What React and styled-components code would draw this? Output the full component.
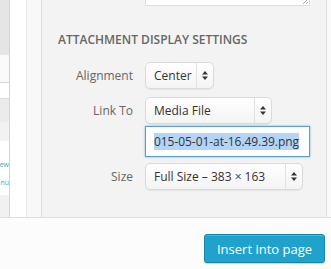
import styled, { createGlobalStyle } from 'styled-components';

const GlobalStyle = createGlobalStyle`
    html, body {
        margin: 0;
        padding: 0;
        background: #fcfcfc;
        font-family: "Open Sans", "Liberation Sans", sans-serif;
    }
`

const Frame = styled.div`
    width: 331px;
    height: 269px;
    display: flex;
    flex-direction: column;
    overflow: hidden;
`

const Main = styled.div`
    height: 217px;
    display: flex;
`

const GridStrip = styled.div`
    width: 9px;
    border-right: 1px solid #d4d4d4;
    display: flex;
    flex-direction: column;
    background: #fff;
`

const StripBlock = styled.div`
    height: ${p => p.$h}px;
    box-sizing: border-box;
    background: ${p => p.$bg};
    border-top: ${p => p.$top ? '1px solid #dcdcdc' : 'none'};
    border-bottom: ${p => p.$bottom ? '1px solid #d4d4d4' : 'none'};
    display: flex;
    flex-direction: column;
    padding-top: ${p => p.$pt || 0}px;
    gap: 9px;
    flex: ${p => p.$grow ? 1 : 'none'};
`

const TinyLink = styled.div`
    display: flex;
    justify-content: flex-end;
    white-space: nowrap;
    font-size: 7px;
    line-height: 9px;
    color: #4a9fd0;
    overflow: hidden;
`

const Gutter = styled.div`
    width: 16px;
    background: #fff;
    border-right: 1px solid #e8e8e8;
`

const Scroll = styled.div`
    width: 14px;
    background: #f8f8f8;
`

const Sidebar = styled.div`
    width: 284px;
    background: #f3f3f3;
    border-left: 1px solid #dddddd;
    border-right: 1px solid #dddddd;
    display: flex;
    flex-direction: column;
`

const Edge = styled.div`
    flex: 1;
    background: #fafafa;
`

const Caption = styled.div`
    margin-left: 103px;
    width: 163px;
    height: 5px;
    background: #fff;
    border: 1px solid #dddddd;
    border-top: none;
    position: relative;
`

const Grip = styled.svg`
    position: absolute;
    right: 1px;
    bottom: 1px;
`

const Heading = styled.h3`
    margin: 26px 0 0 16px;
    font-size: 12px;
    line-height: 16px;
    font-weight: 600;
    color: #666;
    text-transform: uppercase;
`

const Row = styled.div`
    display: flex;
    align-items: center;
    margin-top: ${p => p.$mt}px;
    height: ${p => p.$h || 27}px;
`

const Label = styled.span`
    width: 91px;
    padding-right: 12px;
    text-align: right;
    font-size: 12px;
    color: #666;
    flex: none;
`

const SelectBox = styled.div`
    width: ${p => p.$w}px;
    height: 27px;
    box-sizing: border-box;
    display: flex;
    align-items: stretch;
    border: 1px solid #dadada;
    border-radius: 5px;
    background: linear-gradient(#ffffff, #f4f4f4);
    box-shadow: 0 1px 1px rgba(0, 0, 0, 0.06);
    font-size: 12px;
    color: #333;
`

const SelectText = styled.span`
    flex: 1;
    display: flex;
    align-items: center;
    padding-left: 8px;
    white-space: nowrap;
`

const SelectArrow = styled.span`
    width: 16px;
    border-left: 1px solid #e2e2e2;
    display: flex;
    align-items: center;
    justify-content: center;
`

const UrlField = styled.div`
    width: 165px;
    height: 31px;
    box-sizing: border-box;
    border: 1px solid #5b9dd9;
    box-shadow: 0 0 2px rgba(30, 140, 190, 0.6);
    background: #fff;
    display: flex;
    align-items: center;
    padding-left: 8px;
    font-size: 12px;
    letter-spacing: -0.05px;
    color: #333;
    white-space: nowrap;
    overflow: hidden;
`

const Selected = styled.span`
    background: #b3d4f7;
    line-height: 17px;
`

const Footer = styled.div`
    flex: 1;
    border-top: 1px solid #dddddd;
    background: #fcfcfc;
    display: flex;
    justify-content: flex-end;
    align-items: flex-start;
    padding: 16px 6px 0 0;
`

const PrimaryButton = styled.button`
    width: 121px;
    height: 29px;
    box-sizing: border-box;
    border: 1px solid #1784ab;
    border-radius: 3px;
    background: #1fa2cb;
    box-shadow: inset 0 1px 0 rgba(120, 200, 230, 0.5), 0 1px 0 rgba(0, 0, 0, 0.15);
    color: #fff;
    font-family: "Open Sans", "Liberation Sans", sans-serif;
    font-size: 13px;
    padding: 0;
`

function Arrows() {
    return (
        <svg width="6" height="9" viewBox="0 0 6 9">
            <path d="M3 0 L6 3.5 L0 3.5 Z M0 5.5 L6 5.5 L3 9 Z" fill="#333" />
        </svg>
    )
}

function Select({ width, children }) {
    return (
        <SelectBox $w={width}>
            <SelectText>{children}</SelectText>
            <SelectArrow><Arrows /></SelectArrow>
        </SelectBox>
    )
}

export default function App() {
    return (
        <Frame>
            <GlobalStyle />
            <Main>
                <GridStrip>
                    <StripBlock $h={55} $bg="#e5e5e5" />
                    <StripBlock $h={28} $bg="#fafafa" $bottom />
                    <StripBlock $h={15} $bg="#fff" />
                    <StripBlock $h={24} $bg="#ebebeb" $top />
                    <StripBlock $h={19} $bg="#f2f2f2" />
                    <StripBlock $h={54} $bg="#fff" $pt={19}>
                        <TinyLink>iew</TinyLink>
                        <TinyLink>nu</TinyLink>
                    </StripBlock>
                    <StripBlock $grow $bg="#f1f1f1" />
                </GridStrip>
                <Gutter />
                <Scroll />
                <Sidebar>
                    <Caption>
                        <Grip width="6" height="4" viewBox="0 0 6 4">
                            <path d="M1 4 L5 0 M4 4 L6 2" stroke="#999" strokeWidth="0.8" />
                        </Grip>
                    </Caption>
                    <Heading>Attachment Display Settings</Heading>
                    <Row $mt={14}>
                        <Label>Alignment</Label>
                        <Select width={69}>Center</Select>
                    </Row>
                    <Row $mt={8}>
                        <Label>Link To</Label>
                        <Select width={127}>Media File</Select>
                    </Row>
                    <Row $mt={2} $h={31}>
                        <Label />
                        <UrlField><Selected>015-05-01-at-16.49.39.png</Selected></UrlField>
                    </Row>
                    <Row $mt={6}>
                        <Label>Size</Label>
                        <Select width={158}>Full Size – 383 × 163</Select>
                    </Row>
                </Sidebar>
                <Edge />
            </Main>
            <Footer>
                <PrimaryButton>Insert into page</PrimaryButton>
            </Footer>
        </Frame>
    )
}
